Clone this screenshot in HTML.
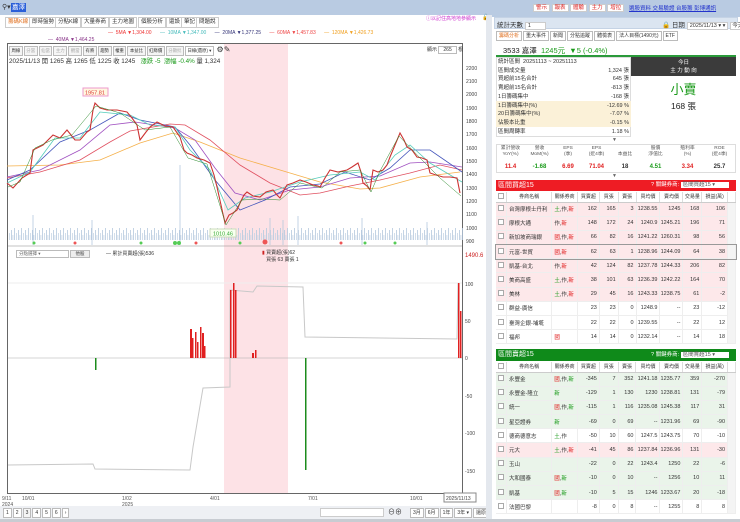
<!DOCTYPE html>
<html><head><meta charset="utf-8">
<style>
*{margin:0;padding:0;box-sizing:border-box}
body{width:740px;height:522px;overflow:hidden;background:#fff;font-family:"Liberation Sans","Noto Sans CJK TC",sans-serif;font-size:6px;color:#333;position:relative}
.a{position:absolute;white-space:nowrap}
.tab{position:absolute;top:17px;height:11px;border:1px solid #ccc;background:#fff;font-size:5.5px;line-height:9px;padding:0 2px;color:#333}
.tb{display:inline-block;border:1px solid #bbb;padding:0 2px;margin-right:1px;line-height:8px;font-size:5px;background:#f5f5f5}
.tl .tb{font-size:4.4px;padding:0 1.5px}
table{border-collapse:collapse}
.gt{position:absolute;left:496px;width:240px;font-size:5.5px}
.gt td{height:14.2px;border-bottom:1px solid #eee;border-right:1px solid #eee;text-align:right;padding-right:2px}
.gt td.n{text-align:left;padding-left:2px}
.gt th{height:10px;font-weight:normal;border-right:1px solid #ddd;border-bottom:1px solid #ccc;font-size:5px;background:#fff}
.r{color:#e02020}.g{color:#1a9a1a}
.cb{display:inline-block;width:6px;height:6px;border:1px solid #aaa;background:#fff}
</style></head><body>
<div class="a" style="left:0;top:0;width:490px;height:15px;background:#b9cbe2"></div>
<div class="a" style="left:2px;top:3px;font-size:7px">⚲▾</div>
<div class="a" style="left:11px;top:3px;background:#2a5fd8;color:#fff;font-size:6.5px;padding:0 1px;line-height:9px">嘉澤</div>
<div class="a" style="left:490px;top:0;width:250px;height:17px;background:#b9cbe2"></div>
<div class="a" style="left:533px;top:3px;font-size:5.5px">
<span style="background:#fff;color:#d22;border:1px solid #ccc;padding:0 2px">警示</span> <span style="background:#fff;color:#d22;border:1px solid #ccc;padding:0 2px">報表</span> <span style="background:#fff;color:#d22;border:1px solid #ccc;padding:0 2px">體驗</span> <span style="background:#fff;color:#d22;border:1px solid #ccc;padding:0 2px">主力</span> <span style="background:#fff;color:#d22;border:1px solid #ccc;padding:0 2px">增拉</span></div>
<div class="a" style="left:629px;top:4px;font-size:5.5px;color:#2233cc;text-decoration:underline">選股資料 交易驗證 台股籌 彭博通訊</div>
<div class="tab" style="left:5px;color:#e07020">籌碼K線</div>
<div class="tab" style="left:29px">即時盤勢</div>
<div class="tab" style="left:55px">分點K線</div>
<div class="tab" style="left:81px">大量券商</div>
<div class="tab" style="left:109px">主力地圖</div>
<div class="tab" style="left:138px">個股分析</div>
<div class="tab" style="left:166px">還設</div>
<div class="tab" style="left:181px">筆記</div>
<div class="tab" style="left:196px">問題說</div>
<div class="a" style="left:108px;top:30px;font-size:5px"><span style="color:#e33">— &nbsp;5MA ▼1,304.00</span> &nbsp; &nbsp; &nbsp;<span style="color:#4bb">— &nbsp;10MA ▼1,347.00</span> &nbsp; &nbsp; &nbsp;<span style="color:#337">— &nbsp;20MA ▼1,377.25</span> &nbsp; &nbsp; &nbsp;<span style="color:#e44">— &nbsp;60MA ▼1,457.83</span> &nbsp; &nbsp; &nbsp;<span style="color:#f0a020">— &nbsp;120MA ▼1,426.73</span></div>
<div class="a" style="left:48px;top:37px;font-size:5px;color:#838"><span>— &nbsp;40MA ▼1,464.25</span></div>
<div class="a" style="left:426px;top:15px;font-size:5px;color:#c3c">ⓘ以記住高地地參顯示</div>
<div class="a" style="left:482px;top:14px;font-size:6px">🔓</div>
<div class="a" style="left:7px;top:43px;width:456px;height:451px;border:1px solid #666"></div>
<div class="a" style="left:224px;top:44px;width:64px;height:449px;background:#fde2e6"></div>
<div class="a tl" style="left:9px;top:45px"><span class="tb">周線</span><span class="tb" style="color:#aaa">分當</span><span class="tb" style="color:#aaa">仙當</span><span class="tb" style="color:#aaa">主力</span><span class="tb" style="color:#aaa">觀當</span><span class="tb">有將</span><span class="tb">趨勢</span><span class="tb">權重</span><span class="tb">本益比</span><span class="tb">紅綠價</span><span class="tb" style="color:#aaa">分顯批</span><span class="tb" style="background:#fff">日線(還原) ▾</span> <span style="font-size:8px">⚙✎</span></div>
<div class="a" style="left:427px;top:46px;font-size:5px">顯示 <span style="border:1px solid #bbb;padding:0 4px">265</span> 根</div>
<div class="a" style="left:9px;top:56px;font-size:6.3px">2025/11/13 開 1265 高 1265 低 1225 收 1245 &nbsp; <span class="g">漲跌 -5 &nbsp;漲幅 -0.4%</span> 量 1,324</div>
<svg class="a" style="left:0;top:0" width="490" height="522">
<g font-size="5" fill="#444" font-family="Liberation Sans">
<text x="466" y="70">2200</text><text x="466" y="83">2100</text><text x="466" y="96">2000</text><text x="466" y="110">1900</text><text x="466" y="123">1800</text><text x="466" y="136">1700</text><text x="466" y="150">1600</text><text x="466" y="163">1500</text><text x="466" y="176">1400</text><text x="466" y="190">1300</text><text x="466" y="203">1200</text><text x="466" y="216">1100</text><text x="466" y="230">1000</text><text x="466" y="243">900</text>
<text x="465" y="286">100</text><text x="465" y="323">50</text><text x="465" y="360">0</text><text x="465" y="398">-50</text><text x="465" y="435">-100</text><text x="465" y="473">-150</text>
</g>
<text x="465" y="257" font-size="6" fill="#c22" font-family="Liberation Sans">1490.6</text>
<defs><pattern id="vp" width="7" height="20" patternUnits="userSpaceOnUse"><rect x="0" y="8" width="0.8" height="12" fill="#b4c8de"/><rect x="2" y="13" width="0.8" height="7" fill="#c6d5e6"/><rect x="4" y="10" width="0.8" height="10" fill="#b4c8de"/><rect x="5.5" y="15" width="0.8" height="5" fill="#c6d5e6"/></pattern></defs>
<rect x="8" y="225" width="455" height="20" fill="url(#vp)"/>
<g stroke="#b4c8de" stroke-width="0.8"><line x1="33" y1="215" x2="33" y2="245"/><line x1="92" y1="220" x2="92" y2="245"/><line x1="180" y1="165" x2="180" y2="245"/><line x1="270" y1="218" x2="270" y2="245"/><line x1="283" y1="220" x2="283" y2="245"/><line x1="298" y1="216" x2="298" y2="245"/><line x1="362" y1="218" x2="362" y2="245"/><line x1="427" y1="222" x2="427" y2="245"/></g>
<g fill="#5c5"><circle cx="34" cy="243" r="1.5"/><circle cx="141" cy="243" r="1.5"/><circle cx="175" cy="243" r="2"/><circle cx="179" cy="243" r="2"/><circle cx="240" cy="243" r="1.5"/><circle cx="365" cy="243" r="1.5"/><circle cx="395" cy="243" r="1.5"/></g>
<g fill="#e55"><circle cx="75" cy="243" r="1.5"/><circle cx="196" cy="243" r="1.5"/><circle cx="265" cy="242" r="2.5"/><circle cx="341" cy="243" r="1.5"/></g>
<polyline fill="none" stroke="#f5b04a" stroke-width="0.8" points="7,166 60,165 100,160 140,143 173,133 200,142 240,158 280,170 320,182 360,189 380,188 420,177 460,172"/>
<polyline fill="none" stroke="#e05060" stroke-width="0.8" points="7,178 40,172 80,160 110,142 130,131 170,124 185,125 210,140 240,165 270,183 300,195 320,193 350,186 380,180 410,173 440,165 462,170"/>
<polyline fill="none" stroke="#a050c0" stroke-width="0.8" points="7,177 40,170 80,150 110,125 135,122 175,128 195,140 215,168 235,193 260,200 290,190 320,187 350,178 380,176 410,163 430,162 462,167"/>
<polyline fill="none" stroke="#4455bb" stroke-width="0.8" points="7,180 30,170 60,142 90,130 120,113 140,120 175,127 190,145 215,180 240,210 265,200 290,187 320,184 345,172 370,180 390,168 410,150 430,150 462,172"/>
<polyline fill="none" stroke="#5cb" stroke-width="0.8" points="7,183 30,172 55,138 80,138 100,112 130,115 150,125 175,127 190,150 210,170 228,210 245,198 270,192 300,182 330,175 360,172 375,180 395,155 410,145 430,163 462,182"/>
<polyline fill="none" stroke="#c33" stroke-width="1.1" points="7,183 13,188 22,178 30,173 33,150 43,145 53,135 60,138 67,130 75,140 80,140 87,132 90,130 93,110 95,103 100,108 107,110 117,110 127,112 132,118 137,125 140,140 146,132 150,127 157,122 165,126 173,127 180,137 184,150 187,153 192,155 197,158 204,160 210,163 214,175 217,187 221,205 225,223 229,215 233,213 237,210 240,203 244,195 247,192 253,196 260,197 266,192 273,190 277,195 280,198 284,190 287,185 293,183 300,180 306,182 313,185 318,186 320,187 325,178 330,170 338,172 347,170 352,167 358,163 361,172 363,183 367,186 370,190 373,170 378,172 383,170 387,165 390,157 395,145 400,133 404,140 407,147 412,150 417,157 422,158 427,160 430,173 436,175 443,177 450,177 457,178 460,193"/>
<polyline fill="none" stroke="#2a8a2a" stroke-width="0.5" points="8,187 20,182 35,148 52,140 72,135 96,106 120,113 145,130 170,127 188,158 207,164 226,225 242,200 262,199 280,200 300,183 322,188 340,172 360,170 371,192 380,171 399,136 420,158 440,178 461,196"/>
<rect x="83" y="88" width="25" height="8" fill="#fff8e0" stroke="#e9c"/><text x="85" y="94.5" font-size="5.5" fill="#d33" font-family="Liberation Sans">1957.81</text>
<rect x="210" y="229" width="26" height="8" fill="#f8fff0" stroke="#cdb"/><text x="213" y="235.5" font-size="5.5" fill="#3a3" font-family="Liberation Sans">1010.46</text>
<line x1="8" y1="246" x2="462" y2="246" stroke="#888" stroke-width="0.6"/>
<line x1="8" y1="283" x2="462" y2="283" stroke="#eee"/>
<line x1="8" y1="358" x2="462" y2="358" stroke="#aaa" stroke-width="0.6"/>
<polyline fill="none" stroke="#c8c8c8" stroke-width="1" points="8,465 93,464 95,469 190,470 193,447 203,388 230,387 230,290 253,292 257,286 303,287 305,337 457,339 458,283"/>
<g fill="#e02020"><rect x="190" y="329" width="2" height="29"/><rect x="192" y="338" width="1.5" height="20"/><rect x="195" y="332" width="1.5" height="26"/><rect x="197" y="342" width="1.5" height="16"/><rect x="200" y="327" width="1.5" height="31"/><rect x="202" y="333" width="2" height="25"/><rect x="204" y="346" width="1.5" height="12"/><rect x="230" y="290" width="1.5" height="68"/><rect x="233" y="283" width="1.5" height="75"/><rect x="235" y="290" width="1.5" height="68"/><rect x="252" y="353" width="2" height="5"/><rect x="255" y="350" width="1.5" height="8"/><rect x="458" y="283" width="1.5" height="75"/><rect x="460" y="311" width="1.5" height="47"/></g>
<g fill="#1c8c1c"><rect x="95" y="358" width="1.5" height="12"/><rect x="305" y="358" width="1.5" height="112"/></g>
<g font-size="5" fill="#555" font-family="Liberation Sans"><text x="2" y="500">9/11</text><text x="2" y="506">2024</text><text x="22" y="500">10/01</text><text x="122" y="500">1/02</text><text x="122" y="506">2025</text><text x="210" y="500">4/01</text><text x="308" y="500">7/01</text><text x="410" y="500">10/01</text></g>
<rect x="444" y="493" width="32" height="9" fill="#fff" stroke="#888"/><text x="446" y="500" font-size="5" fill="#444" font-family="Liberation Sans">2025/11/13</text>
</svg>
<div class="a" style="left:16px;top:250px;width:53px;height:8px;border:1px solid #bbb;font-size:4.5px;color:#666;padding-left:2px;line-height:6px">分點選擇 ▾</div>
<div class="a" style="left:70px;top:250px;width:20px;height:8px;border:1px solid #bbb;background:#eee;font-size:4.5px;line-height:6px;text-align:center">他股</div>
<div class="a" style="left:106px;top:250px;font-size:5px">— 累計買賣超(張)536</div>
<div class="a" style="left:262px;top:249px;font-size:5px"><span style="color:#c22">▮</span> 買賣超(張)62<br>&nbsp;&nbsp; 買張 63 賣張 1</div>
<div class="a" style="left:0;top:506px;width:490px;height:13px;background:#eef0f4"></div>
<div class="a" style="left:3px;top:508px;font-size:5.5px"><span class="tb" style="background:#fff">1</span><span class="tb" style="background:#fff">2</span><span class="tb">3</span><span class="tb" style="background:#fff">4</span><span class="tb" style="background:#fff">5</span><span class="tb" style="background:#fff">6</span><span class="tb" style="background:#fff">›</span></div>
<div class="a" style="left:320px;top:508px;width:64px;height:9px;border:1px solid #ccc;background:#fff"></div>
<div class="a" style="left:388px;top:507px;font-size:7px">⊖⊕</div>
<div class="a" style="left:410px;top:508px;font-size:5px"><span class="tb" style="background:#fff">3月</span><span class="tb" style="background:#fff">6月</span><span class="tb" style="background:#fff">1年</span><span class="tb" style="background:#fff">3年 ▾</span><span class="tb" style="background:#fff">還原</span></div>
<div class="a" style="left:0;top:519px;width:740px;height:3px;background:#c8ccd2"></div>
<div class="a" style="left:486px;top:15px;width:6px;height:504px;background:#e4e8ee"></div>
<div class="a" style="left:494px;top:17px;width:244px;height:12px;background:#dbe5f1;border:1px solid #c5d3e5"></div>
<div class="a" style="left:497px;top:19px;font-size:6.5px">統計天數 <span style="background:#fff;border:1px solid #ccc;padding:0 14px 0 2px;font-size:5.5px">1</span></div>
<div class="a" style="left:662px;top:19px;font-size:6.5px">🔒 日期 <span style="background:#fff;border:1px solid #ccc;padding:0 2px;font-size:5.5px">2025/11/13 ▾ ▾</span> <span style="background:#fff;border:1px solid #ccc;padding:0 1px;font-size:5.5px">今天</span></div>
<div class="a" style="left:496px;top:31px;font-size:5.5px"><span class="tb" style="color:#e07020;background:#fff">籌碼分析</span><span class="tb" style="background:#fff">重大事件</span><span class="tb" style="background:#fff">新聞</span><span class="tb" style="background:#fff">分點追蹤</span><span class="tb" style="background:#fff">體檢表</span><span class="tb" style="background:#fff">法人目標(1490元)</span><span class="tb" style="background:#fff">ETF</span></div>
<div class="a" style="left:496px;top:42px;width:240px;height:15px;border-bottom:2px solid #2a9a3a"></div>
<div class="a" style="left:503px;top:45px;font-size:7.5px;color:#222">3533 嘉澤 &nbsp;<span class="g">1245元 &nbsp;▼5 (-0.4%)</span></div>
<div class="a" style="left:496px;top:57px;width:135px;height:80px;border:1px solid #ddd"></div>
<div class="a" style="left:496px;top:101px;width:135px;height:26px;background:#fbf1d8"></div>
<div class="a" style="left:498px;top:58px;font-size:5.5px;line-height:8.7px">統計區間 &nbsp;20251113 ~ 20251113<br>區間成交量<br>買超前15名合計<br>賣超前15名合計<br>1日籌碼集中<br>1日籌碼集中(%)<br>20日籌碼集中(%)<br>佔股本比重<br>區間周轉率</div>
<div class="a" style="left:570px;top:58px;width:59px;font-size:5.5px;line-height:8.7px;text-align:right"><br>1,324 張<br>645 張<br>-813 張<br>-168 張<br>-12.69 %<br>-7.07 %<br>-0.15 %<br>1.18 %</div>
<div class="a" style="left:631px;top:57px;width:105px;height:19px;background:#3b3b3b;color:#fff;font-size:5.5px;text-align:center;line-height:8px;padding-top:2px">今日<br>主 力 動 向</div>
<div class="a" style="left:631px;top:82px;width:105px;text-align:center;font-size:13px;color:#1a9a1a;line-height:16px">小賣</div>
<div class="a" style="left:631px;top:100px;width:105px;text-align:center;font-size:8.5px;color:#222">168 張</div>
<div class="a" style="left:612px;top:137px;font-size:5px;color:#666">▼</div>
<div class="a" style="left:496px;top:144px;width:240px;height:29px;border:1px solid #ddd"></div>
<div class="a" style="left:496px;top:146px;width:240px;font-size:4.8px;color:#555;display:flex;text-align:center;line-height:6px"><div style="width:29px">累計營收<br>YoY(%)</div><div style="width:29px">營收<br>MoM(%)</div><div style="width:28px">EPS<br>(季)</div><div style="width:29px">EPS<br>(近4季)</div><div style="width:28px"><br>本益比</div><div style="width:33px">股價<br>淨值比</div><div style="width:31px">殖利率<br>(%)</div><div style="width:33px">ROE<br>(近4季)</div></div>
<div class="a" style="left:496px;top:164px;width:240px;font-size:6px;font-weight:bold;display:flex;text-align:center"><div style="width:29px" class="r">11.4</div><div style="width:29px" class="g">-1.68</div><div style="width:28px" class="r">6.69</div><div style="width:29px" class="r">71.04</div><div style="width:28px">18</div><div style="width:33px" class="g">4.51</div><div style="width:31px" class="r">3.34</div><div style="width:33px">25.7</div></div>
<div class="a" style="left:612px;top:173px;font-size:5px;color:#666">▼</div>
<div class="a" style="left:496px;top:180px;width:240px;height:11px;background:#ee1c24;color:#fff;font-size:7px;padding-left:2px;line-height:11px">區間買超15<span style="position:absolute;left:155px;font-size:5.5px">? 關鍵券商: <span style="background:#fff;color:#555;padding:0 14px 0 2px">區間買超15 ▾</span></span></div>
<table class="gt" style="top:192px">
<tr><th style="width:9px"><span class="cb"></span></th><th style="width:46px">券商名稱</th><th style="width:26px">關係券商</th><th style="width:22px">買賣超</th><th style="width:19px">買張</th><th style="width:18px">賣張</th><th style="width:24px">買均價</th><th style="width:23px">賣均價</th><th style="width:19px">交易量</th><th style="width:26px">損益(萬)</th><th style="width:8px"></th></tr>
<tr style="background:#fde8ea"><td class="n"><span class="cb"></span></td><td class="n">台灣摩根士丹利</td><td class="n"><span class="g">土</span>,作,<span class="r">新</span></td><td>162</td><td>165</td><td>3</td><td>1238.55</td><td>1245</td><td>168</td><td>106</td><td rowspan="10" style="background:#f4f4f4"></td></tr>
<tr style="background:#fde8ea"><td class="n"><span class="cb"></span></td><td class="n">摩根大通</td><td class="n">作,<span class="r">新</span></td><td>148</td><td>172</td><td>24</td><td>1240.9</td><td>1245.21</td><td>196</td><td>71</td></tr>
<tr style="background:#fde8ea"><td class="n"><span class="cb"></span></td><td class="n">新加坡商瑞銀</td><td class="n"><span class="r">國</span>,作,<span class="r">新</span></td><td>66</td><td>82</td><td>16</td><td>1241.22</td><td>1260.31</td><td>98</td><td>56</td></tr>
<tr style="background:#fde8ea;outline:1px solid #999"><td class="n"><span class="cb"></span></td><td class="n">元富-世貿</td><td class="n"><span class="r">國</span>,<span class="r">新</span></td><td>62</td><td>63</td><td>1</td><td>1238.96</td><td>1244.09</td><td>64</td><td>38</td></tr>
<tr style="background:#fde8ea"><td class="n"><span class="cb"></span></td><td class="n">凱基-台北</td><td class="n">作,<span class="r">新</span></td><td>42</td><td>124</td><td>82</td><td>1237.78</td><td>1244.33</td><td>206</td><td>82</td></tr>
<tr style="background:#fde8ea"><td class="n"><span class="cb"></span></td><td class="n">美商高盛</td><td class="n"><span class="g">土</span>,作,<span class="r">新</span></td><td>38</td><td>101</td><td>63</td><td>1236.39</td><td>1242.22</td><td>164</td><td>70</td></tr>
<tr style="background:#fde8ea"><td class="n"><span class="cb"></span></td><td class="n">美林</td><td class="n"><span class="g">土</span>,作,<span class="r">新</span></td><td>29</td><td>45</td><td>16</td><td>1243.33</td><td>1238.75</td><td>61</td><td>-2</td></tr>
<tr><td class="n"><span class="cb"></span></td><td class="n">群益-廣信</td><td></td><td>23</td><td>23</td><td>0</td><td>1248.9</td><td>--</td><td>23</td><td>-12</td></tr>
<tr><td class="n"><span class="cb"></span></td><td class="n">臺灣企銀-埔墘</td><td></td><td>22</td><td>22</td><td>0</td><td>1239.55</td><td>--</td><td>22</td><td>12</td></tr>
<tr><td class="n"><span class="cb"></span></td><td class="n">福邦</td><td class="n r">國</td><td>14</td><td>14</td><td>0</td><td>1232.14</td><td>--</td><td>14</td><td>18</td></tr>
</table>
<div class="a" style="left:496px;top:349px;width:240px;height:12px;background:#0f8a1a;color:#fff;font-size:7px;padding-left:2px;line-height:12px">區間賣超15<span style="position:absolute;left:155px;font-size:5.5px">? 關鍵券商: <span style="background:#fff;color:#555;padding:0 14px 0 2px">區間賣超15 ▾</span></span></div>
<table class="gt" style="top:362px">
<tr><th style="width:9px"><span class="cb"></span></th><th style="width:46px">券商名稱</th><th style="width:26px">關係券商</th><th style="width:22px">買賣超</th><th style="width:19px">買張</th><th style="width:18px">賣張</th><th style="width:24px">買均價</th><th style="width:23px">賣均價</th><th style="width:19px">交易量</th><th style="width:26px">損益(萬)</th><th style="width:8px"></th></tr>
<tr style="background:#eaf4ea"><td class="n"><span class="cb"></span></td><td class="n">永豐金</td><td class="n"><span class="r">國</span>,作,<span class="g">新</span></td><td>-345</td><td>7</td><td>352</td><td>1241.18</td><td>1235.77</td><td>359</td><td>-270</td><td rowspan="10" style="background:#f4f4f4"></td></tr>
<tr style="background:#eaf4ea"><td class="n"><span class="cb"></span></td><td class="n">永豐金-隆立</td><td class="n g">新</td><td>-129</td><td>1</td><td>130</td><td>1230</td><td>1238.81</td><td>131</td><td>-79</td></tr>
<tr style="background:#eaf4ea"><td class="n"><span class="cb"></span></td><td class="n">統一</td><td class="n"><span class="r">國</span>,作,<span class="g">新</span></td><td>-115</td><td>1</td><td>116</td><td>1235.08</td><td>1245.38</td><td>117</td><td>31</td></tr>
<tr style="background:#eaf4ea"><td class="n"><span class="cb"></span></td><td class="n">星亞證券</td><td class="n g">新</td><td>-69</td><td>0</td><td>69</td><td>--</td><td>1231.96</td><td>69</td><td>-90</td></tr>
<tr><td class="n"><span class="cb"></span></td><td class="n">德商德意志</td><td class="n"><span class="g">土</span>,作</td><td>-50</td><td>10</td><td>60</td><td>1247.5</td><td>1243.75</td><td>70</td><td>-10</td></tr>
<tr style="background:#fde8ea"><td class="n"><span class="cb"></span></td><td class="n">元大</td><td class="n"><span class="g">土</span>,作,<span class="r">新</span></td><td>-41</td><td>45</td><td>86</td><td>1237.84</td><td>1236.96</td><td>131</td><td>-30</td></tr>
<tr style="background:#eaf4ea"><td class="n"><span class="cb"></span></td><td class="n">玉山</td><td></td><td>-22</td><td>0</td><td>22</td><td>1243.4</td><td>1250</td><td>22</td><td>-6</td></tr>
<tr style="background:#eaf4ea"><td class="n"><span class="cb"></span></td><td class="n">大和國泰</td><td class="n"><span class="r">國</span>,<span class="g">新</span></td><td>-10</td><td>0</td><td>10</td><td>--</td><td>1256</td><td>10</td><td>11</td></tr>
<tr style="background:#eaf4ea"><td class="n"><span class="cb"></span></td><td class="n">凱基</td><td class="n"><span class="r">國</span>,<span class="g">新</span></td><td>-10</td><td>5</td><td>15</td><td>1246</td><td>1233.67</td><td>20</td><td>-18</td></tr>
<tr><td class="n"><span class="cb"></span></td><td class="n">法國巴黎</td><td></td><td>-8</td><td>0</td><td>8</td><td>--</td><td>1255</td><td>8</td><td>8</td></tr>
</table>
</body></html>
